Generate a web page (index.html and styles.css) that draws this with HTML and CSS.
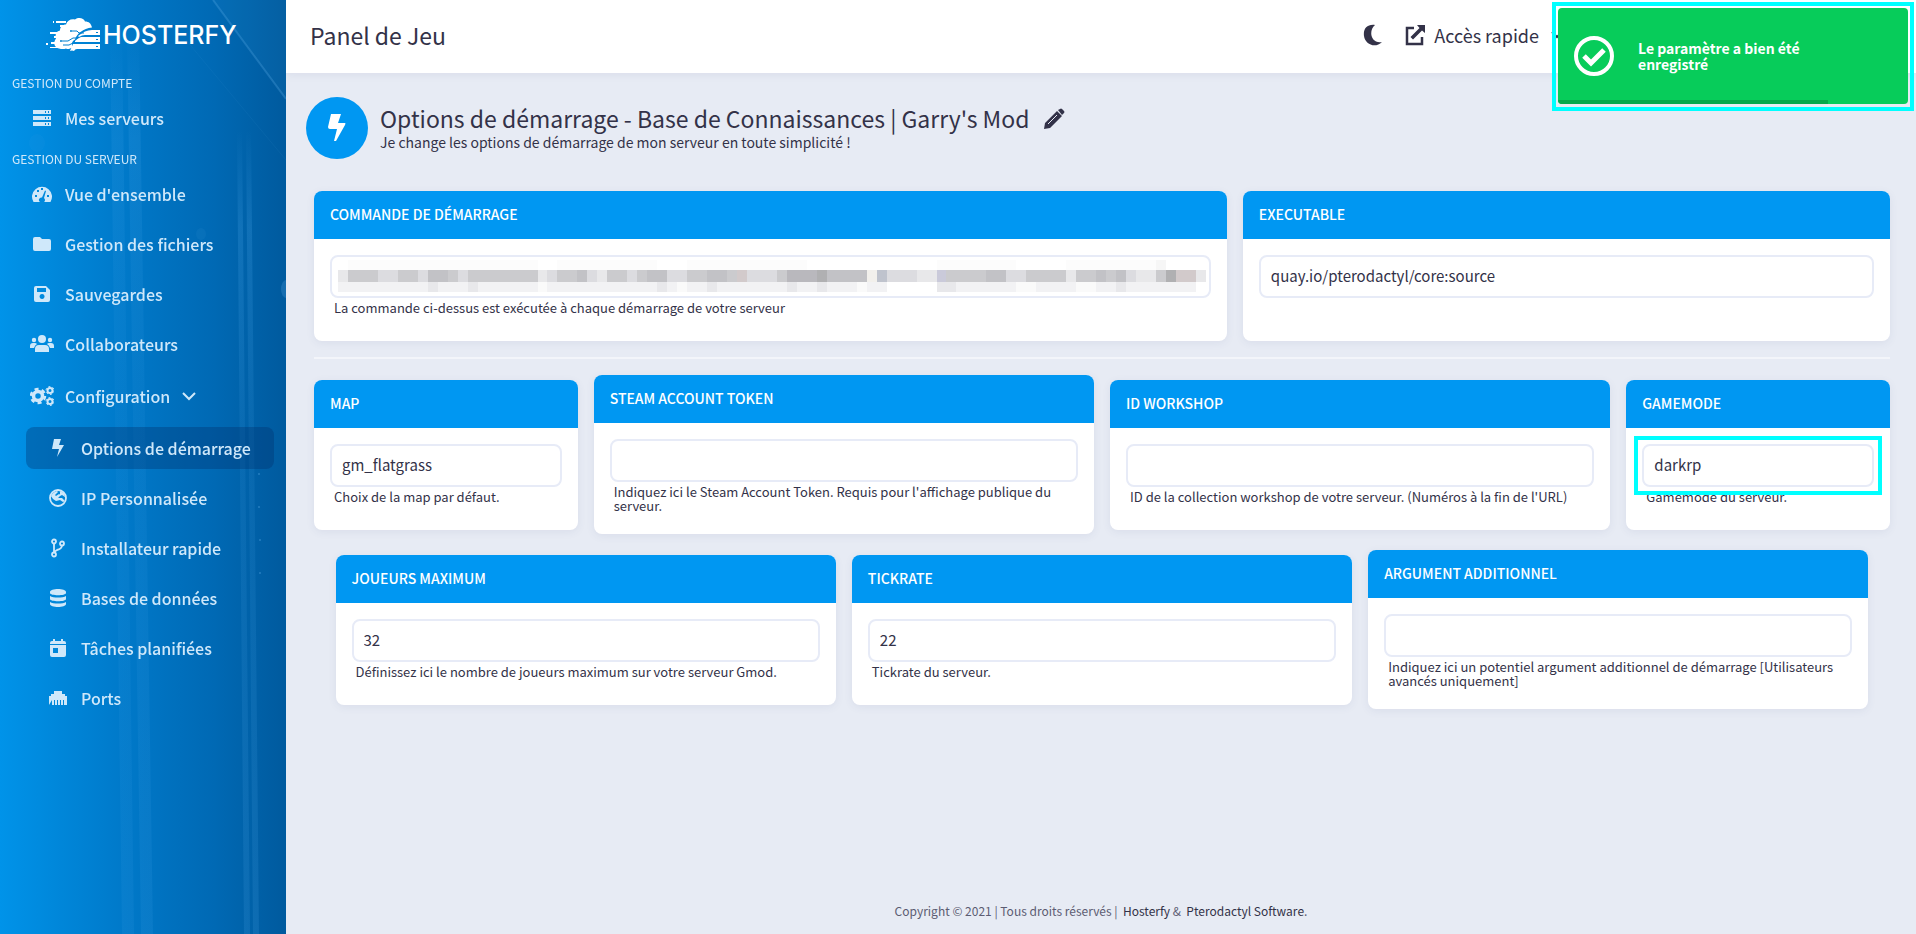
FILE: index.html
```html
<!DOCTYPE html>
<html lang="fr">
<head>
<meta charset="utf-8">
<title>Panel de Jeu - Hosterfy</title>
<link rel="stylesheet" href="styles.css">
</head>
<body>
<div class="layout">
  <aside class="sidebar">
    <svg class="backdrop" viewBox="0 0 286 934" preserveAspectRatio="none" aria-hidden="true">
      <defs>
        <linearGradient id="beam" x1="0" y1="0" x2="0" y2="1">
          <stop offset="0" stop-color="#5db4f5" stop-opacity="0"/>
          <stop offset=".12" stop-color="#5db4f5" stop-opacity="1"/>
          <stop offset=".4" stop-color="#5db4f5" stop-opacity=".5"/>
          <stop offset="1" stop-color="#5db4f5" stop-opacity=".8"/>
        </linearGradient>
      </defs>
      <g fill="url(#beam)">
        <path opacity=".11" d="M110 30h12l12 904h-12z"/>
        <path opacity=".13" d="M127 30h12l14 904h-12z"/>
        <path opacity=".18" d="M237 130h5l8 804h-6z"/>
        <path opacity=".18" d="M246 130h5l8 804h-6z"/>
      </g>
      <path fill="#5db4f5" opacity=".06" d="M213 0h73v99z"/>
      <path d="M213 0L286 99" stroke="#6ab8f0" stroke-width="2" opacity=".25"/>
      <path d="M186 40L286 160" stroke="#6ab8f0" opacity=".06"/>
      <g fill="#6ab8f0" opacity=".35">
        <circle cx="259" cy="474" r="1"/><circle cx="259" cy="507" r="1"/><circle cx="260" cy="540" r="1"/><circle cx="260" cy="573" r="1"/>
        <ellipse cx="201" cy="234" rx="5" ry="6" opacity=".2"/><ellipse cx="37" cy="143" rx="8" ry="9" opacity=".15"/><ellipse cx="286" cy="289" rx="5" ry="9" opacity=".6"/>
      </g>
    </svg>
    <a class="logo" href="#">
      <svg class="line" viewBox="0 0 56 36" aria-hidden="true">
        <g fill="#fff">
          <path d="M14 32.500c-5-1-6-6-3-10-1-4 0-7 4-8 0-4 3-6 6-6 1-4 5-6 9-5 4-3 9-1 10 2 4 0 6 2 7 6-9 1-15 6-17 12-3 2-3 3-3 6l1 2-3 1q-2 1-4 0-3 1-7 0z"/>
          <path d="M33 20c5-4 9-6 14-6h8v5H40q-3 0-6 2zM30 25q3-3 6-4h19v5H30zM28 28h27v5H32q-2 0-3 2-2-1-4 0z"/>
          <path d="M11 5h10v2H11zM15 9h7v2h-7zM5 16h10v2H5zM9 20h5v2H9zM6 26h6v2H6zM1 27h2v2H1zM5 31h7v1H5zM8 5h1v2H8z"/>
        </g>
        <path d="M17 25h6l5-3h5M18 29h6l4-2M27 15h5l2 2h5" stroke="#0080d0"/>
        <path d="M16 26a1 1 0 1 0 0-2 1 1 0 0 0 0 2zM26 16a1 1 0 1 0 0-2 1 1 0 0 0 0 2zM51 16h2v1h-2zM51 23h2v1h-2zM51 30h2v1h-2z" fill="#0080d0"/>
      </svg>
      <span>HOSTERFY</span>
    </a>
    <nav>
      <h2 class="nav-title">GESTION DU COMPTE</h2>
      <ul>
        <li><a href="#"><svg viewBox="0 0 20 20"><path fill-rule="evenodd" d="M1 2h18v4H1zM1 8h18v4H1zM1 14h18v4H1zM13 3v2h1V3zm3 0v2h1V3zm-3 6v2h1V9zm3 0v2h1V9zm-3 6v2h1v-2zm3 0v2h1v-2z"/></svg>Mes serveurs</a></li>
      </ul>
      <h2 class="nav-title spaced">GESTION DU SERVEUR</h2>
      <ul>
        <li><a href="#"><svg viewBox="0 0 20 20"><path fill-rule="evenodd" d="M1.500 18A10 10 0 1 1 18.500 18H12a2.500 2.500 0 0 0 0-4l2-7-1-.5-3 7A2.500 2.500 0 0 0 8 18zM9 4v2h2V4zM5 6v2h2V6zM3 11v2h2v-2zm12 0v2h2v-2z"/></svg>Vue d'ensemble</a></li>
        <li><a href="#"><svg viewBox="0 0 20 20"><path d="M1 5q0-2 2-2h5l2 2h7q2 0 2 2v8q0 2-2 2H3q-2 0-2-2z"/></svg>Gestion des fichiers</a></li>
        <li><a href="#"><svg viewBox="0 0 20 20"><path fill-rule="evenodd" d="M2 4q0-2 2-2h10l4 4v10q0 2-2 2H4q-2 0-2-2zM5 4v4h9V4zM10 10a2.500 2.500 0 1 0 .1 0z"/></svg>Sauvegardes</a></li>
        <li><a href="#"><svg viewBox="0 0 24 20"><circle cx="12" cy="5" r="4"/><circle cx="4" cy="6" r="2.200"/><circle cx="20" cy="6" r="2.200"/><path d="M5 18v-3q0-4 4-4h6q4 0 4 4v3zM0 14v-2q0-3 3-3h2q1 0 2 1-2 1-3 4zM24 14v-2q0-3-3-3h-2q-1 0-2 1 2 1 3 4z"/></svg>Collaborateurs</a></li>
        <li class="parent"><a href="#"><svg viewBox="0 0 24 20"><g fill="none" stroke="#cfe8fa"><circle cx="8" cy="10" r="4.500" stroke-width="3.500"/><circle cx="8" cy="10" r="7" stroke-width="2.500" stroke-dasharray="4 3.330"/><circle cx="20" cy="4.500" r="2.500" stroke-width="2"/><circle cx="20" cy="4.500" r="4" stroke-width="1" stroke-dasharray="2 2.190"/><circle cx="20" cy="15.500" r="2.500" stroke-width="2"/><circle cx="20" cy="15.500" r="4" stroke-width="1" stroke-dasharray="2 2.190"/></g></svg>Configuration<svg class="chevron" viewBox="0 0 16 16"><path d="M2 5l6 6 6-6" fill="none" stroke="#cfe8fa" stroke-width="2"/></svg></a></li>
      </ul>
      <ul class="submenu">
        <li><a class="active" href="#" aria-current="page"><svg viewBox="0 0 20 20"><path d="M6 1h7l-2 6h5L9 19l2-8H4z"/></svg>Options de démarrage</a></li>
        <li><a href="#"><svg viewBox="0 0 20 20"><circle cx="10" cy="10" r="8" fill="none" stroke="#cfe8fa" stroke-width="1.800"/><path d="M3 8q2-4 6-5l1 1-3 3 1 1 3-2 2 1-3 3 4 0 3 3-2 1-3-2-4 1-3-2zM12 3l4 2 1 4-3-2-2 1z"/></svg>IP Personnalisée</a></li>
        <li><a href="#"><svg viewBox="0 0 20 20"><g fill="none" stroke="#cfe8fa" stroke-width="1.800"><circle cx="6" cy="3.500" r="2"/><circle cx="6" cy="16.500" r="2"/><circle cx="14" cy="5.500" r="2"/><path d="M6 5v10M14 7q0 4-5 5l-3 2"/></g></svg>Installateur rapide</a></li>
        <li><a href="#"><svg viewBox="0 0 20 20"><path d="M2 4c0-4 16-4 16 0v1c0 3-16 3-16 0zM2 8c3 2 13 2 16 0v3c0 3-16 3-16 0zM2 14c3 2 13 2 16 0v2c0 4-16 4-16 0z"/></svg>Bases de données</a></li>
        <li><a href="#"><svg viewBox="0 0 20 20"><path fill-rule="evenodd" d="M5 1h2v2h6V1h2v2h1q2 0 2 2v1H2V5q0-2 2-2h1zM2 7h16v10q0 2-2 2H4q-2 0-2-2zM5 10v5h5v-5z"/></svg>Tâches planifiées</a></li>
        <li><a href="#"><svg viewBox="0 0 20 20"><path d="M1 17V8h2V6h3V3h8v3h3v2h2v9h-3v-5h-1v5h-2v-5h-1v5h-2v-5H9v5H7v-5H6v5H4v-5z"/></svg>Ports</a></li>
      </ul>
    </nav>
  </aside>

  <div class="content">
    <header class="topbar">
      <div class="brand">Panel de Jeu</div>
      <div class="tools">
        <button class="tool" type="button" aria-label="Mode sombre"><svg viewBox="0 0 22 22"><path d="M13 1C5 0 1 5 2 12c1 8 11 13 18 6C9 20 6 7 13 1z"/></svg></button>
        <button class="tool" type="button"><svg viewBox="0 0 22 22"><path d="M10 4H3v16h15v-7" fill="none" stroke="#333248" stroke-width="2.500"/><path d="M13 1h8v8l-3-2.500-9 9L6.500 13l9-9z"/></svg>Accès rapide<svg class="caret" viewBox="0 0 12 12"><path d="M1 3l5 5 5-5" fill="none" stroke="#333248" stroke-width="2"/></svg></button>
      </div>
    </header>

    <main>
      <div class="heading">
        <span class="heading-icon"><svg viewBox="0 0 20 30"><path d="M4 1h10l-3 9h7q1 0 0 2L9 28l-2 0 3-12H3q-2 0-2-2z"/></svg></span>
        <div>
          <h1>Options de démarrage - Base de Connaissances | Garry's Mod <button class="edit" type="button" aria-label="Renommer"><svg viewBox="0 0 22 22"><path d="M15 2l2-1q1-1 2 0l2 2q1 1 0 2l-2 2zM14 3l5 5L7 20l-6 1 1-6z"/><path d="M5 16l9-9" stroke="#e7ebf4" stroke-width="1"/></svg></button></h1>
          <p>Je change les options de démarrage de mon serveur en toute simplicité !</p>
        </div>
      </div>

      <div class="row">
        <section class="card w7">
          <h2><label for="cmd">COMMANDE DE DÉMARRAGE</label></h2>
          <div class="card-body">
            <div class="field">
              <input id="cmd" type="text" readonly>
              <svg class="mosaic" viewBox="0 0 87 32" preserveAspectRatio="none" shape-rendering="crispEdges" aria-hidden="true">
                <path fill="#fcfcfc" d="M1 0h19v10H1zM22 0h10v10H22zM35 0h12v10H35zM60 0h8v10h-8zM73 0h9v10h-9z"/>
                <path fill="#f6f6f6" d="M82 0h1v10h-1z"/>
                <path fill="#cbcbce" d="M0 10h87v12H0z"/>
                <path fill="#e8e8ea" d="M0 10h1v12H0zM20 10h1v12h-1zM26 10h1v12h-1zM58 10h2v12h-2zM73 10h1v12h-1zM80 10h2v12h-2zM86 10h1v12h-1z"/>
                <path fill="#dcdce0" d="M4 10h2v12H4zM8 10h1v12H8zM12 10h1v12h-1zM21 10h1v12h-1zM25 10h1v12h-1zM29 10h1v12h-1zM33 10h2v12h-2zM41 10h3v12h-3zM55 10h3v12h-3zM67 10h2v12h-2zM79 10h1v12h-1z"/>
                <path fill="#c2c2c6" d="M9 10h2v12H9zM24 10h1v12h-1zM31 10h2v12h-2zM37 10h2v12h-2zM49 10h4v12h-4zM65 10h2v12h-2zM76 10h1v12h-1zM78 10h1v12h-1z"/>
                <path fill="#b9b8bd" d="M45 10h3v12h-3z"/>
                <path fill="#b0b0b2" d="M48 10h1v12h-1zM83 10h1v12h-1z"/>
                <path fill="#f2f0ec" d="M53 10h1v12h-1z"/>
                <path fill="#bfc3cd" d="M54 10h1v12h-1z"/>
                <path fill="#d2cacb" d="M40 10h1v12h-1zM84 10h2v12h-2z"/>
                <path fill="#cacada" d="M60 10h1v12h-1z"/>
                <path fill="#f2f2f4" d="M0 22h55v10H0zM60 22h26v10H60z"/>
                <path fill="#e8e8eb" d="M9 22h1v10H9zM13 22h1v10h-1zM32 22h1v10h-1zM37 22h1v10h-1zM45 22h1v10h-1zM48 22h1v10h-1zM60 22h2v10h-2zM78 22h1v10h-1z"/>
                <path fill="#fafafa" d="M20 22h1v10h-1zM34 22h1v10h-1zM52 22h1v10h-1zM68 22h2v10h-2zM74 22h2v10h-2z"/>
              </svg>
            </div>
            <small>La commande ci-dessus est exécutée à chaque démarrage de votre serveur</small>
          </div>
        </section>
        <section class="card w5">
          <h2><label for="exe">EXECUTABLE</label></h2>
          <div class="card-body"><input id="exe" type="text" value="quay.io/pterodactyl/core:source"></div>
        </section>
      </div>
      <hr>
      <div class="row centered">
        <section class="card c2"><h2><label for="map">MAP</label></h2><div class="card-body"><input id="map" type="text" value="gm_flatgrass"><small>Choix de la map par défaut.</small></div></section>
        <section class="card c4"><h2><label for="token">STEAM ACCOUNT TOKEN</label></h2><div class="card-body"><input id="token" type="text"><small>Indiquez ici le Steam Account Token. Requis pour l'affichage publique du serveur.</small></div></section>
        <section class="card c4"><h2><label for="workshop">ID WORKSHOP</label></h2><div class="card-body"><input id="workshop" type="text"><small>ID de la collection workshop de votre serveur. (Numéros à la fin de l'URL)</small></div></section>
        <section class="card c2"><h2><label for="mode">GAMEMODE</label></h2><div class="card-body"><div class="field marked"><input id="mode" type="text" value="darkrp"></div><small>Gamemode du serveur.</small></div></section>
      </div>
      <div class="row centered">
        <section class="card c4"><h2><label for="players">JOUEURS MAXIMUM</label></h2><div class="card-body"><input id="players" type="text" value="32"><small>Définissez ici le nombre de joueurs maximum sur votre serveur Gmod.</small></div></section>
        <section class="card c4"><h2><label for="tick">TICKRATE</label></h2><div class="card-body"><input id="tick" type="text" value="22"><small>Tickrate du serveur.</small></div></section>
        <section class="card c4"><h2><label for="arg">ARGUMENT ADDITIONNEL</label></h2><div class="card-body"><input id="arg" type="text"><small>Indiquez ici un potentiel argument additionnel de démarrage [Utilisateurs avancés uniquement]</small></div></section>
      </div>
    </main>
    <footer>Copyright © 2021 | Tous droits réservés |&nbsp; <a href="#">Hosterfy</a> &amp; &nbsp;<a href="#">Pterodactyl Software</a>.</footer>
  </div>
</div>

<div class="toast-frame">
  <div class="toast" role="status">
    <svg class="line" viewBox="0 0 40 40" stroke="#fff"><circle cx="20" cy="20" r="18" stroke-width="4"/><path d="M10 20l7 7 13-13" stroke-width="5"/></svg>
    <strong>Le paramètre a bien été enregistré</strong>
    <span class="progress"></span>
  </div>
</div>
</body>
</html>
```
FILE: styles.css
```css
* { box-sizing: border-box; }
body {
  margin: 0;
  background: #e7ebf4;
  color: #333248;
  font: 14px/20px "Noto Sans CJK SC", "Noto Sans", sans-serif;
}
h1, h2, p, ul { margin: 0; padding: 0; font-weight: 400; }
ul { list-style: none; }
a { color: inherit; text-decoration: none; }
button { border: 0; padding: 0; background: none; color: inherit; font: inherit; }
svg { flex: none; fill: currentColor; }
svg.line { fill: none; }

.layout { display: flex; min-height: 100vh; }

.sidebar {
  position: relative;
  flex: 0 0 286px;
  background: linear-gradient(90deg, #0093e9 0%, #0087da 20%, #0078c8 45%, #0069b4 75%, #005a9e 100%);
  color: #cfe8fa;
}
.backdrop { position: absolute; inset: 0; width: 100%; height: 100%; }
.logo {
  position: relative;
  display: flex;
  align-items: center;
  gap: 2px;
  height: 36px;
  margin: 16px 0 20px 45px;
  color: #fff;
  font: 500 25px/36px Inter, sans-serif;
}
.logo svg { width: 56px; height: 36px; }
.logo span { padding-top: 2px; }
.sidebar nav { position: relative; }
.nav-title { padding: 0 12px; font-size: 12px; line-height: 22px; }
.nav-title.spaced { margin-top: 4px; }
.sidebar li { height: 50px; padding-bottom: 3px; display: flex; align-items: center; }
.sidebar li a { display: flex; align-items: center; gap: 11px; padding-left: 30px; font-size: 16px; font-weight: 500; }
.sidebar li svg { width: 24px; height: 20px; }
.sidebar li .chevron { width: 16px; height: 16px; }
.sidebar .parent { height: 54px; }
.submenu { padding: 0 12px 0 26px; }
.sidebar .submenu li a { flex: 1; height: 42px; padding-left: 20px; border-radius: 8px; }
.sidebar .submenu .active { background: rgba(0, 50, 110, .35); }

.content { flex: 1; min-width: 0; display: flex; flex-direction: column; }
.topbar {
  display: flex;
  align-items: center;
  justify-content: space-between;
  height: 73px;
  padding: 0 353px 3px 24px;
  background: #fff;
  box-shadow: 0 2px 8px rgba(60, 80, 130, .08);
}
.brand { font-size: 23px; line-height: 32px; }
.tools { display: flex; align-items: center; gap: 20px; }
.tool { display: flex; align-items: center; gap: 8px; font-size: 18px; line-height: 28px; }
.tool svg { width: 22px; height: 22px; }
.tool .caret { width: 12px; height: 12px; margin-left: 4px; }

main { flex: 1; padding: 24px 26px 0 28px; }
.heading { display: flex; align-items: center; gap: 12px; margin-left: -8px; height: 62px; }
.heading-icon { display: flex; align-items: center; justify-content: center; width: 62px; height: 62px; border-radius: 50%; background: #0097f2; color: #fff; }
.heading-icon svg { width: 20px; height: 30px; }
.heading > div { padding-bottom: 2px; }
h1 { font-size: 23px; line-height: 30px; }
.heading p { font-size: 14px; line-height: 18px; }
.edit { margin-left: 8px; vertical-align: -2px; }
.edit svg { display: block; width: 22px; height: 22px; }

.row { display: flex; gap: 16px; }
.heading + .row { margin-top: 32px; }
.row.centered { align-items: center; justify-content: center; margin-top: 16px; }
.card {
  display: flow-root;
  min-height: 150px;
  border-radius: 8px;
  overflow: hidden;
  background: #fff;
  box-shadow: 0 2px 8px rgba(60, 80, 130, .08);
}
.w7 { flex: 914 1 0; }
.w5 { flex: 648 1 0; }
.c2 { flex: 0 0 calc(100% / 6 + 1px); }
.c4 { flex: 0 0 calc(100% / 3 - 25px); }
.card h2 { padding: 13px 16px 15px; background: #0097f2; color: #fff; font-size: 14px; font-weight: 500; line-height: 20px; }
.card-body { padding: 16px 16px 20px; }
input {
  display: block;
  width: 100%;
  height: 43px;
  padding: 0 10px 2px;
  border: 2px solid #e7ebf7;
  border-radius: 8px;
  background: #fff;
  color: #333248;
  font: 15px/20px "Noto Sans CJK SC", "Noto Sans", sans-serif;
}
small { display: block; padding: 3px 4px 1px; font-size: 13px; line-height: 14px; }
.field { position: relative; }
.mosaic { position: absolute; top: 5px; left: 8px; width: calc(100% - 13px); height: 32px; }
.marked::after { content: ""; position: absolute; inset: -8px; border: 4px solid #00ffff; z-index: 1; pointer-events: none; }
hr { height: 2px; margin: 16px 0 0; border: 0; background: #f3f5fa; }
footer { padding: 0 0 12px; text-align: center; font-size: 12px; line-height: 22px; color: #5c5c72; }
footer a { color: #333248; }

.toast-frame { position: absolute; top: 2px; right: 2px; width: 362px; padding: 2px 2px 3px; border: 4px solid #00ffff; }
.toast { position: relative; display: flex; align-items: center; gap: 24px; height: 96px; padding: 0 90px 0 16px; border-radius: 4px; overflow: hidden; background: #07cc5a; color: #fff; }
.toast svg { width: 40px; height: 40px; }
.toast strong { font-size: 14px; line-height: 16px; }
.progress { position: absolute; left: 0; bottom: 0; width: 77%; height: 4px; background: #06a84b; }
```
